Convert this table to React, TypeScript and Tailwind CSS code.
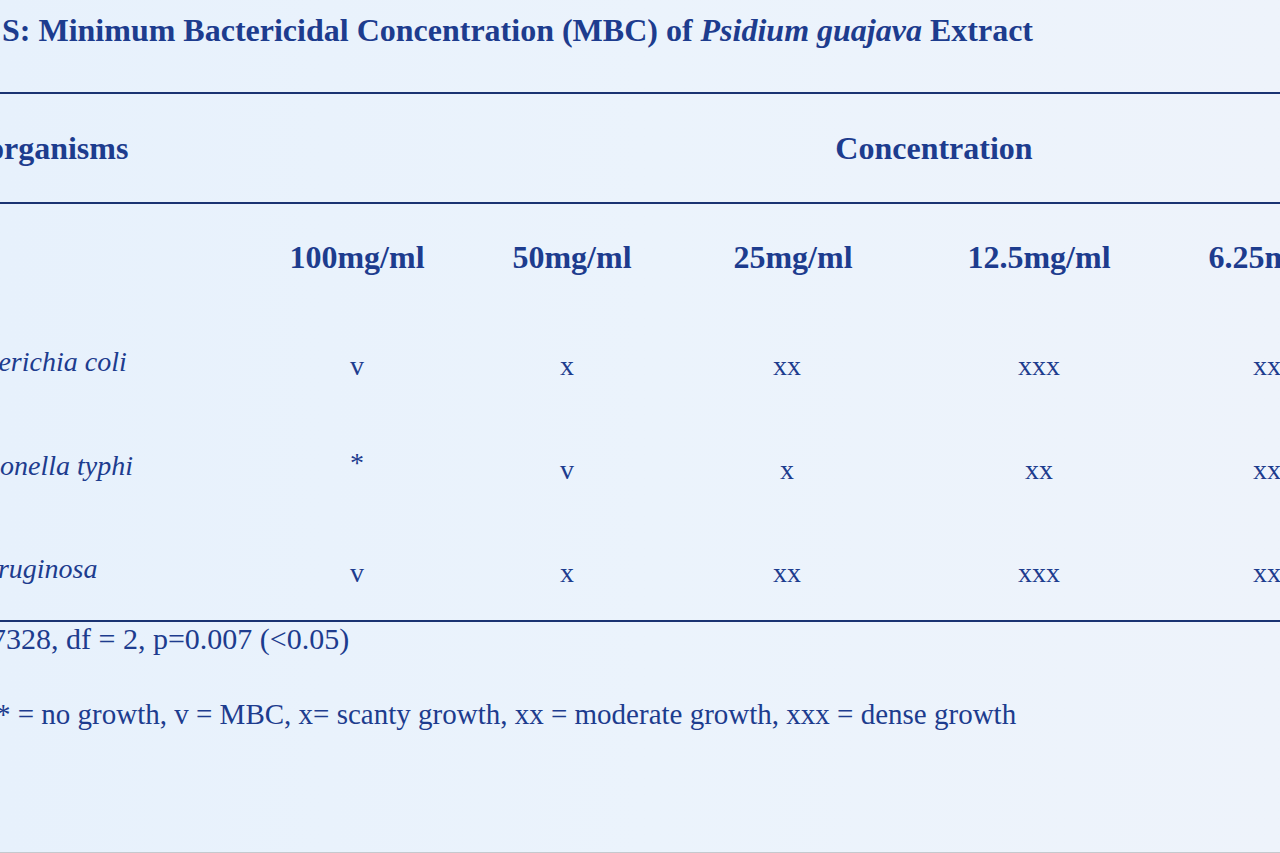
const serif = "font-['Liberation_Serif','Times_New_Roman',serif]";

const columns = ['100mg/ml', '50mg/ml', '25mg/ml', '12.5mg/ml', '6.25mg/ml'];

const rows = [
  { name: 'Escherichia coli', values: ['v', 'x', 'xx', 'xxx', 'xx'] },
  { name: 'Salmonella typhi', values: ['*', 'v', 'x', 'xx', 'xx'] },
  { name: 'P. aeruginosa', values: ['v', 'x', 'xx', 'xxx', 'xx'] },
];

// same column widths for every row so the values line up
const grid = 'grid grid-cols-[311px_212px_218px_224px_268px_214px] w-[1447px] -ml-[60px]';

// small per-column nudges, the printed values do not sit exactly under the headings
const nudge = ['', 'pr-[10px]', 'pr-[12px]', '', 'pr-[26px]'];

function Rule() {
  return <div className="h-[2px] w-full bg-[#1a3372]" />;
}

export default function App() {
  return (
    <div className={`${serif} relative h-[853px] w-full overflow-hidden bg-gradient-to-r from-[#e7f1fc] via-[#ebf3fc] to-[#eef3fb] text-[#1d3c8e] border-b border-[#c5c9ce]`}>
      <div className="flex flex-col">
        {/* title */}
        <div className="flex h-[60px] items-center pl-[2px] text-[32px] font-bold leading-none">
          <span>
            S: Minimum Bactericidal Concentration (MBC) of <i>Psidium guajava</i> Extract
          </span>
        </div>

        <div className="mt-[32px]">
          <Rule />
        </div>

        {/* top header */}
        <div className={`${grid} h-[108px] items-center text-[32px] font-bold leading-none`}>
          <div className="-ml-[35px]">Microorganisms</div>
          <div />
          <div />
          <div className="col-span-2 pl-[14px] text-center">Concentration</div>
          <div />
        </div>

        <Rule />

        {/* concentration headings */}
        <div className={`${grid} h-[106px] items-center text-[32px] font-bold leading-none`}>
          <div />
          {columns.map((c) => (
            <div key={c} className="text-center">
              {c}
            </div>
          ))}
        </div>

        {/* organisms */}
        {rows.map((r, i) => (
          <div
            key={r.name}
            className={`${grid} ${i === 2 ? 'h-[102px]' : 'h-[104px]'} items-center leading-none`}
          >
            <div className="pl-[4px] text-[28px] italic">{r.name}</div>
            {r.values.map((v, j) => (
              <div
                key={j}
                className={`text-center text-[28px] ${nudge[j]} ${v === '*' ? '-mt-[6px]' : 'mt-[8px]'}`}
              >
                {v}
              </div>
            ))}
          </div>
        ))}

        <Rule />

        {/* notes */}
        <div className="flex h-[34px] items-center text-[30px] leading-none">
          <span className="-ml-[9px]">7328, df = 2, p=0.007 (&lt;0.05)</span>
        </div>
        <div className="mt-[36px] flex h-[44px] items-center text-[29px] leading-none">
          <span className="-ml-[4px]">
            * = no growth, v = MBC, x= scanty growth, xx = moderate growth, xxx = dense growth
          </span>
        </div>
      </div>
    </div>
  );
}
